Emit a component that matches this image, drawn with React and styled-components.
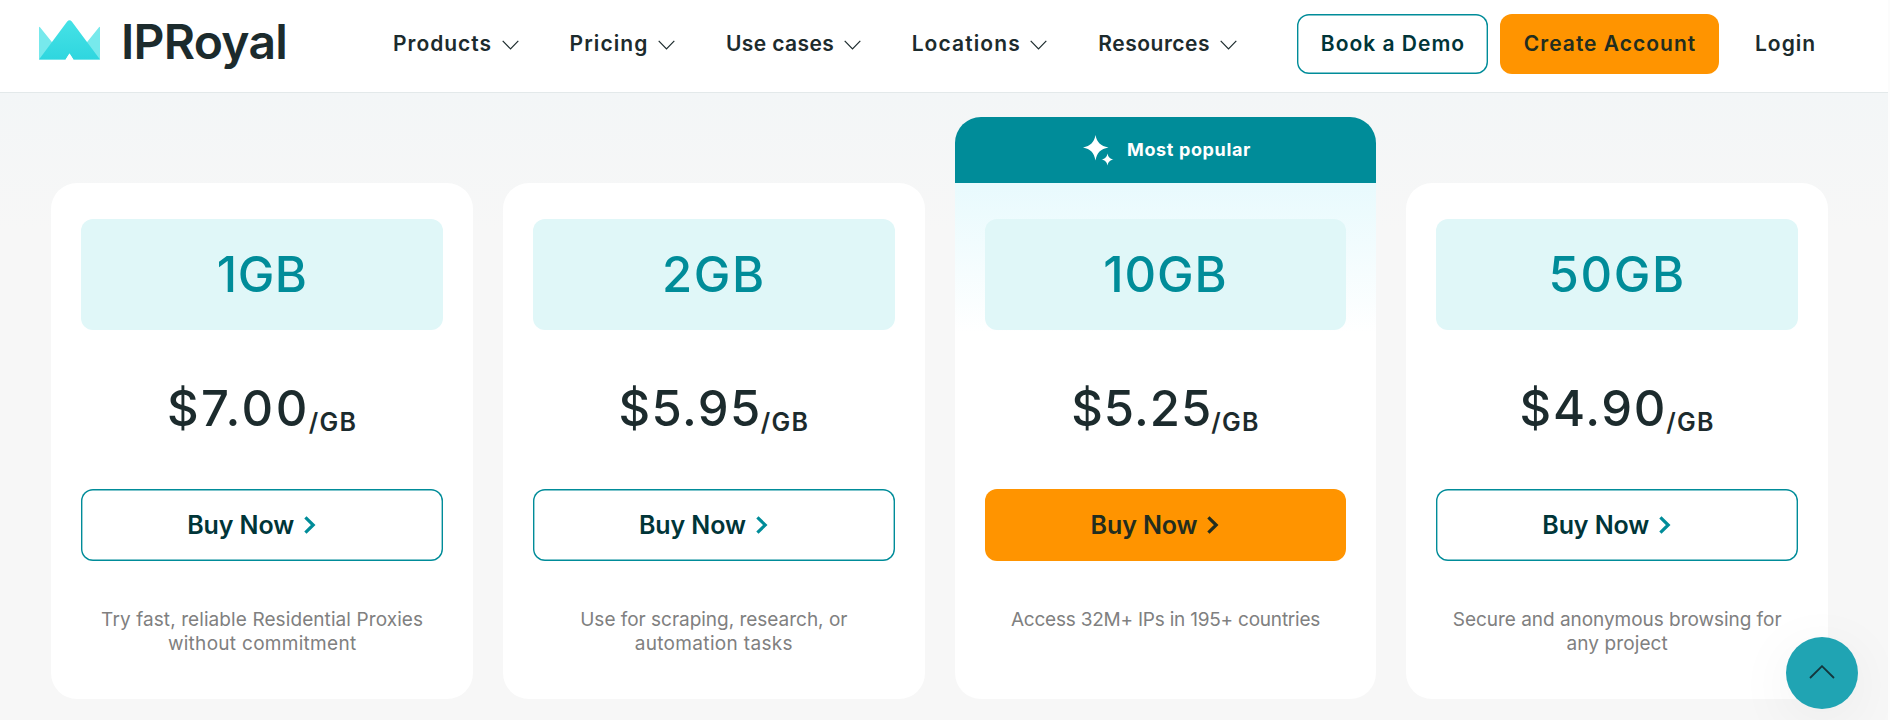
import React from "react";
import styled, { createGlobalStyle } from "styled-components";

const menu = [
  { label: "Products", tracking: 0.98 },
  { label: "Pricing", tracking: 1.1 },
  { label: "Use cases", tracking: 0.38 },
  { label: "Locations", tracking: 1.1 },
  { label: "Resources", tracking: 0.52 },
];

const plans = [
  {
    size: "1GB",
    sizeTracking: 0.5,
    price: "$7.00",
    priceTracking: 2.5,
    text: [
      { line: "Try fast, reliable Residential Proxies", tracking: 0.09 },
      { line: "without commitment", tracking: 0.29 },
    ],
  },
  {
    size: "2GB",
    sizeTracking: 1.5,
    price: "$5.95",
    priceTracking: 1.4,
    text: [
      { line: "Use for scraping, research, or", tracking: -0.02 },
      { line: "automation tasks", tracking: 0.34 },
    ],
  },
  {
    size: "10GB",
    sizeTracking: 0.9,
    price: "$5.25",
    priceTracking: 1,
    popular: true,
    text: [{ line: "Access 32M+ IPs in 195+ countries", tracking: -0.22 }],
  },
  {
    size: "50GB",
    sizeTracking: 1.7,
    price: "$4.90",
    priceTracking: 1.7,
    text: [
      { line: "Secure and anonymous browsing for", tracking: -0.04 },
      { line: "any project", tracking: 0.1 },
    ],
  },
];

const ChevronDown = () => (
  <svg width="17" height="10" viewBox="0 0 17 10" fill="none">
    <path d="M0.7 0.8 8.5 8.8 16.3 0.8" stroke="currentColor" strokeWidth="1.2" />
  </svg>
);

const ChevronRight = () => (
  <svg width="12" height="18" viewBox="0 0 12 18" fill="none">
    <path d="M1.4 1.4 9.2 9 1.4 16.6" stroke="currentColor" strokeWidth="3.2" />
  </svg>
);

const Crown = () => (
  <svg width="61" height="40" viewBox="0 0 61 40">
    <defs>
      <linearGradient id="peak" x1="0" y1="0" x2="0" y2="1">
        <stop offset="0" stopColor="#46e2e6" />
        <stop offset="1" stopColor="#2fd6df" />
      </linearGradient>
    </defs>
    <path d="M0 7.5Q0 6 1 7.3L27 39.5H0Z" fill="#77e9ec" />
    <path d="M61 7.5Q61 6 60 7.3L34 39.5H61Z" fill="#77e9ec" />
    <path
      d="M0 39.5 28.2 1.6Q30.5-1.2 32.8 1.6L61 39.5H34.5L30.5 33.5 26.5 39.5Z"
      fill="url(#peak)"
    />
    <path d="M26.5 40 30.5 33.5 34.5 40Z" fill="#fff" />
  </svg>
);

const Sparkles = () => (
  <svg width="31" height="31" viewBox="0 0 31 31" fill="#fff">
    <path d="M12.5 0C14 7.5 17.5 11 25.5 12.5 17.5 14 14 17.5 12.5 25.5 11 17.5 7.5 14 0 12.5 7.5 11 11 7.5 12.5 0Z" />
    <path d="M24.5 18.5C25.3 22.2 26.8 23.7 30.5 24.5 26.8 25.3 25.3 26.8 24.5 30.5 23.7 26.8 22.2 25.3 18.5 24.5 22.2 23.7 23.7 22.2 24.5 18.5Z" />
  </svg>
);

export default function App() {
  return (
    <>
      <GlobalStyle />
      <S.Page>
        <S.Header>
          <S.Logo>
            <Crown />
            <S.LogoText>IPRoyal</S.LogoText>
          </S.Logo>
          <S.Nav>
            {menu.map((item) => (
              <S.NavItem key={item.label} $tracking={item.tracking}>
                {item.label}
                <ChevronDown />
              </S.NavItem>
            ))}
          </S.Nav>
          <S.Actions>
            <S.HeaderButton $width={191}>Book a Demo</S.HeaderButton>
            <S.HeaderButton $width={219} $filled>
              Create Account
            </S.HeaderButton>
            <S.Login>Login</S.Login>
          </S.Actions>
        </S.Header>

        <S.Plans>
          {plans.map((plan) => (
            <div key={plan.size}>
              {plan.popular && (
                <S.Banner>
                  <Sparkles />
                  <span>Most popular</span>
                </S.Banner>
              )}
              <S.Card $popular={plan.popular}>
                <S.Size $tracking={plan.sizeTracking}>{plan.size}</S.Size>
                <S.Price $tracking={plan.priceTracking}>
                  {plan.price}
                  <S.Unit>/GB</S.Unit>
                </S.Price>
                <S.Buy $filled={plan.popular}>
                  Buy Now
                  <ChevronRight />
                </S.Buy>
                <S.Description>
                  {plan.text.map(({ line, tracking }) => (
                    <S.Line key={line} $tracking={tracking}>
                      {line}
                    </S.Line>
                  ))}
                </S.Description>
              </S.Card>
            </div>
          ))}
        </S.Plans>

        <S.ToTop aria-label="Back to top">
          <svg width="26" height="14" viewBox="0 0 26 14" fill="none">
            <path d="M1 13 13 1.2 25 13" stroke="#14363c" strokeWidth="1.8" />
          </svg>
        </S.ToTop>
      </S.Page>
    </>
  );
}

const GlobalStyle = createGlobalStyle`
  * {
    box-sizing: border-box;
  }

  body {
    margin: 0;
    font-family: Inter, "Liberation Sans", sans-serif;
    color: #1c2b2d;
  }

  button {
    font-family: inherit;
    padding: 0;
    border: none;
  }

  svg {
    flex-shrink: 0;
  }
`;

const S = {
  Page: styled.div`
    position: relative;
    height: 720px;
    overflow: hidden;
    border-right: 2px solid #fcfcfc;
    background: linear-gradient(#f3f6f7 93px, #f7f7f7 230px);
  `,

  Header: styled.header`
    display: grid;
    grid-template-columns: 354px 904px auto;
    align-items: center;
    height: 93px;
    padding: 0 0 4px 39px;
    background: #fff;
    border-bottom: 1px solid #e3e9ea;
  `,

  Logo: styled.div`
    display: flex;
    align-items: center;
    gap: 21px;
    height: 40px;
    margin-top: -8px;
  `,

  LogoText: styled.span`
    font-size: 48px;
    font-weight: 600;
    line-height: 48px;
    letter-spacing: -0.75px;
    margin-top: 3px;
  `,

  Nav: styled.nav`
    display: flex;
    gap: 51px;
  `,

  NavItem: styled.span`
    display: flex;
    align-items: center;
    gap: 9.5px;
    font-size: 21px;
    font-weight: 600;
    line-height: 26px;
    letter-spacing: ${(props) => props.$tracking}px;
    white-space: nowrap;

    svg {
      margin-top: 2px;
    }
  `,

  Actions: styled.div`
    display: flex;
    align-items: center;
    gap: 12px;
  `,

  HeaderButton: styled.button`
    width: ${(props) => props.$width}px;
    height: 60px;
    padding: 0 0 1px 1px;
    font-size: 21px;
    font-weight: 600;
    letter-spacing: 1px;
    white-space: nowrap;
    border-radius: 12px;
    box-shadow: ${(props) =>
      props.$filled ? "none" : "inset 0 0 0 1.4px #008c99"};
    background: ${(props) => (props.$filled ? "#ff9400" : "#fff")};
    color: ${(props) => (props.$filled ? "#222d1f" : "#003538")};
  `,

  Login: styled.span`
    margin: -1px 0 0 24px;
    font-size: 21px;
    font-weight: 600;
    letter-spacing: 1px;
  `,

  Plans: styled.section`
    display: grid;
    grid-template-columns: repeat(4, 421.7px);
    gap: 30px;
    align-items: end;
    padding: 24px 0 0 51.3px;
  `,

  Banner: styled.div`
    display: flex;
    align-items: center;
    justify-content: center;
    gap: 13px;
    height: 66px;
    padding-left: 3px;
    border-radius: 26px 26px 0 0;
    background: #008c99;
    color: #fff;
    font-size: 18px;
    font-weight: 700;
    letter-spacing: 0.64px;

    span {
      margin-top: -2px;
    }
  `,

  Card: styled.article`
    height: 516px;
    padding: 36px 30px 0;
    border-radius: ${(props) => (props.$popular ? "0 0 26px 26px" : "26px")};
    background: ${(props) =>
      props.$popular ? "linear-gradient(#e8fafd, #fff 150px)" : "#fff"};
    text-align: center;
  `,

  Size: styled.div`
    height: 111px;
    line-height: 111px;
    border-radius: 12px;
    background: #e0f7f8;
    color: #008c99;
    font-size: 49px;
    font-weight: 500;
    letter-spacing: ${(props) => props.$tracking}px;
  `,

  Price: styled.div`
    height: 60px;
    margin-top: 49px;
    line-height: 60px;
    font-size: 49px;
    font-weight: 500;
    letter-spacing: ${(props) => props.$tracking}px;
    white-space: nowrap;
  `,

  Unit: styled.span`
    margin-left: -1px;
    font-size: 25px;
    font-weight: 600;
    line-height: 1;
    letter-spacing: 1.3px;
    vertical-align: -5px;
  `,

  Buy: styled.button`
    display: flex;
    align-items: center;
    justify-content: center;
    width: 100%;
    height: 72px;
    margin-top: 50px;
    border-radius: 12px;
    box-shadow: ${(props) =>
      props.$filled ? "none" : "inset 0 0 0 1.4px #008c99"};
    background: ${(props) => (props.$filled ? "#ff9400" : "#fff")};
    color: ${(props) => (props.$filled ? "#222d1f" : "#003538")};
    font-size: 25px;
    font-weight: 600;
    letter-spacing: -0.1px;

    svg {
      margin: 0 21px 0 10px;
      color: ${(props) => (props.$filled ? "#222d1f" : "#008c99")};
    }
  `,

  Description: styled.p`
    margin: 47px 0 0;
    color: #808080;
    font-size: 19px;
    line-height: 24px;
  `,

  Line: styled.span`
    display: block;
    letter-spacing: ${(props) => props.$tracking}px;
    white-space: nowrap;
  `,

  ToTop: styled.button`
    position: absolute;
    right: 30px;
    bottom: 11px;
    display: flex;
    align-items: center;
    justify-content: center;
    width: 72px;
    height: 72px;
    border-radius: 50%;
    background: #20a4b3;
    box-shadow: 0 12px 60px rgba(0, 0, 0, 0.06);

    svg {
      margin-bottom: 2px;
    }
  `,
};
